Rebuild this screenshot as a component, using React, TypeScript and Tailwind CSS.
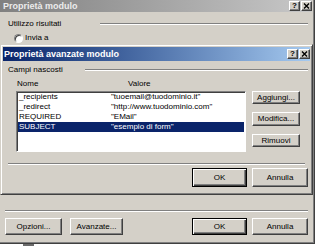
const ui = "font-['Liberation_Sans','Arial',sans-serif]"

// classic 3D borders
const raised =
  "border border-t-white border-l-white border-r-[#404040] border-b-[#404040] shadow-[inset_-1px_-1px_#808080] bg-[#d4d0c8]"
const defaultBtn =
  "border border-black shadow-[inset_1px_1px_white,inset_-1px_-1px_#404040,inset_-2px_-2px_#808080] bg-[#d4d0c8]"
const sunken =
  "border border-t-[#808080] border-l-[#808080] border-r-white border-b-white shadow-[inset_1px_1px_#404040]"
const frame =
  "border border-t-[#d4d0c8] border-l-[#d4d0c8] border-r-[#404040] border-b-[#404040] shadow-[inset_1px_1px_white,inset_-1px_-1px_#808080] p-[2px] bg-[#d4d0c8]"

function Etched({ className = "" }: { className?: string }) {
  return <div className={`h-[2px] border-t border-t-[#808080] border-b border-b-white ${className}`} />
}

function Btn({ label, w, h, primary }: { label: string; w: string; h: string; primary?: boolean }) {
  return (
    <div className={`${primary ? defaultBtn : raised} ${w} ${h} flex items-center justify-center text-[8px] leading-none text-black`}>
      {label}
    </div>
  )
}

function TitleButtons() {
  return (
    <div className="flex gap-[1px]">
      <div className={`${raised} w-[11px] h-[10px] flex items-center justify-center text-[8px] font-bold leading-none text-black`}>
        ?
      </div>
      <div className={`${raised} w-[11px] h-[10px] flex items-center justify-center`}>
        <svg width="7" height="6" viewBox="0 0 7 6">
          <path d="M1 0.5 L6 5.5 M6 0.5 L1 5.5" stroke="black" strokeWidth="1.4" />
        </svg>
      </div>
    </div>
  )
}

const fields = [
  { name: "_recipients", value: "\"tuoemail@tuodominio.it\"" },
  { name: "_redirect", value: "\"http://www.tuodominio.com\"" },
  { name: "REQUIRED", value: "\"EMail\"" },
  { name: "SUBJECT", value: "\"esempio di form\"", selected: true },
]

function AdvancedDialog() {
  return (
    <div className={`${frame} absolute left-0 top-[44px] w-[313px] h-[151px] flex flex-col`}>
      <div className="h-[14px] flex items-center justify-between pl-[1px] pr-[0px] bg-gradient-to-r from-[#0a246a] to-[#a6caf0]">
        <span className="text-[9px] font-bold text-white leading-none">Proprietà avanzate modulo</span>
        <TitleButtons />
      </div>

      <div className="flex items-center mt-[4px] h-[10px]">
        <span className="pl-[5px] w-[82px] text-[8px] leading-[10px]">Campi nascosti</span>
        <Etched className="flex-1 mr-[2px]" />
      </div>

      <div className="flex mt-[4px] h-[10px] text-[8px] leading-[10px]">
        <span className="pl-[14px] w-[125px]">Nome</span>
        <span>Valore</span>
      </div>

      <div className="flex mt-[2px]">
        <div className={`${sunken} ml-[13px] w-[230px] h-[61px] bg-white px-[1px]`}>
          {fields.map((f) => (
            <div
              key={f.name}
              className={`flex h-[10px] items-center text-[8px] leading-none pl-[1px] ${
                f.selected ? "bg-[#0a246a] text-white" : "text-black"
              }`}
            >
              <span className="w-[92px]">{f.name}</span>
              <span>{f.value}</span>
            </div>
          ))}
        </div>
        <div className="flex flex-col ml-[6px]">
          <Btn label="Aggiungi..." w="w-[48px]" h="h-[13px]" />
          <div className="mt-[8px]">
            <Btn label="Modifica..." w="w-[48px]" h="h-[14px]" />
          </div>
          <div className="mt-[8px]">
            <Btn label="Rimuovi" w="w-[48px]" h="h-[13px]" />
          </div>
        </div>
      </div>

      <Etched className="mt-[11px] ml-[5px] mr-[5px]" />

      <div className="flex justify-end gap-[5px] mt-[3px] mr-[2px]">
        <Btn label="OK" w="w-[55px]" h="h-[19px]" primary />
        <Btn label="Annulla" w="w-[56px]" h="h-[19px]" />
      </div>
    </div>
  )
}

export default function App() {
  return (
    <div className={`${ui} relative w-[320px] h-[246px] bg-white overflow-hidden text-black`}>
      <div className={`${frame} ml-[-4px] mt-[-3px] w-[319px] h-[247px] flex flex-col`}>
        <div className="h-[12px] flex items-center justify-between pl-[4px] bg-gradient-to-r from-[#808080] to-[#c8c8c8]">
          <span className="text-[9px] font-bold text-[#ececec] leading-none">Proprietà modulo</span>
          <TitleButtons />
        </div>

        <div className="flex items-center mt-[7px] h-[10px]">
          <span className="pl-[9px] w-[101px] text-[8px] leading-[10px]">Utilizzo risultati</span>
          <Etched className="flex-1 mr-[4px]" />
        </div>

        <div className="flex items-center mt-[4px] h-[10px] pl-[15px]">
          <div className={`${sunken} w-[9px] h-[9px] rounded-full bg-white`} />
          <span className="ml-[2px] text-[8px] leading-[10px]">Invia a</span>
        </div>

        <div className="mt-auto">
          <Etched className="ml-[6px] mr-[4px]" />
          <div className="flex mt-[6px] mb-[6px] ml-[6px] mr-[4px]">
            <Btn label="Opzioni..." w="w-[57px]" h="h-[17px]" />
            <div className="ml-[8px]">
              <Btn label="Avanzate..." w="w-[53px]" h="h-[17px]" />
            </div>
            <div className="flex-1" />
            <Btn label="OK" w="w-[55px]" h="h-[17px]" primary />
            <div className="ml-[5px]">
              <Btn label="Annulla" w="w-[56px]" h="h-[17px]" />
            </div>
          </div>
        </div>
      </div>

      <AdvancedDialog />

      <div className="absolute left-[23px] top-[244px] w-[11px] h-[2px] bg-[#6b6b6b]" />
    </div>
  )
}
